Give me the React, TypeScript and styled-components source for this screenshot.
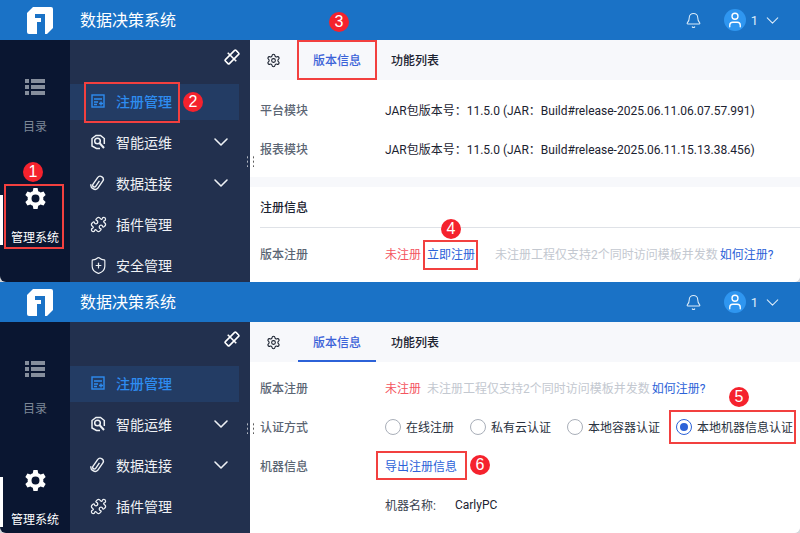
import { FC, ReactNode } from 'react';
import styled, { createGlobalStyle } from 'styled-components';
import { Bell, ChevronDown, Puzzle, Settings, ShieldPlus, User } from 'lucide-react';

const GlobalStyle = createGlobalStyle`
  html, body {
    margin: 0;
    padding: 0;
    width: 800px;
    height: 533px;
    overflow: hidden;
    background: #fff;
    font-family: Roboto, "Noto Sans CJK SC", sans-serif;
  }
  * { box-sizing: border-box; }
`;

const Panel = styled.section<{ $height: number }>`
  position: relative;
  width: 800px;
  height: ${(p) => p.$height}px;
  overflow: hidden;
  background: #d5d7db;
`;

const Header = styled.header`
  display: flex;
  align-items: center;
  height: 40px;
  padding-left: 27px;
  background: #1a72c6;
`;

const Title = styled.h1`
  margin: 0 0 3px 27px;
  font-size: 16px;
  font-weight: 400;
  color: #fff;
`;

const HeaderRight = styled.div`
  display: flex;
  align-items: center;
  margin-left: auto;
  padding-right: 17px;
  color: #dcecf9;
`;

const Avatar = styled.span`
  display: flex;
  align-items: center;
  justify-content: center;
  width: 22px;
  height: 22px;
  margin-left: 22px;
  border-radius: 50%;
  color: #fff;
  background: #2f96f0;
`;

const UserName = styled.span`
  margin: 0 4px 0 5px;
  font-size: 13px;
`;

const Body = styled.div`
  display: flex;
  height: calc(100% - 40px);
  overflow: hidden;
  border-radius: 0 0 6px 6px;
`;

const Rail = styled.aside`
  flex: none;
  width: 70px;
  padding-top: 39px;
  background: #0a1631;
`;

const RailItem = styled.div<{ $active?: boolean }>`
  position: relative;
  display: flex;
  flex-direction: column;
  align-items: center;
  gap: ${(p) => (p.$active ? 20 : 24)}px;
  margin-bottom: 52px;
  font-size: 12px;
  line-height: 16px;
  color: ${(p) => (p.$active ? '#fff' : '#7d8797')};
`;

const RailMarker = styled.i`
  position: absolute;
  left: 0;
  top: 8px;
  width: 3px;
  height: 50px;
  background: #fff;
`;

const Nav = styled.nav`
  position: relative;
  flex: none;
  width: 180px;
  padding-top: 44px;
  background: #22304e;
`;

const PinButton = styled.span`
  position: absolute;
  top: 9px;
  right: 10px;
  display: flex;
`;

const NavItem = styled.div<{ $active?: boolean }>`
  display: flex;
  align-items: center;
  width: 169px;
  height: 36px;
  margin-bottom: 5px;
  padding: 0 0 2px 21px;
  font-size: 14px;
  color: ${(p) => (p.$active ? '#2e8cf0' : '#eef1f5')};
  font-weight: ${(p) => (p.$active ? 500 : 400)};
  background: ${(p) => (p.$active ? '#233c64' : 'transparent')};
`;

const NavIcon = styled.span`
  display: flex;
  align-items: center;
  justify-content: center;
  width: 14px;
  height: 14px;
  margin-right: 11px;

  svg {
    flex: none;
  }
`;

const NavChevron = styled(ChevronDown)`
  margin-left: auto;
  margin-right: 6px;
`;

const Content = styled.main`
  flex: 1;
  min-width: 0;
  background: #f7f8fb;
  font-size: 12px;
`;

const Tabs = styled.div`
  display: flex;
  align-items: center;
  height: 40px;
  padding-left: 16px;
  color: #1b2230;
`;

const Tab = styled.div<{ $active?: boolean; $underline?: boolean }>`
  display: flex;
  align-items: center;
  justify-content: center;
  align-self: stretch;
  width: 78px;
  font-weight: 500;
  color: ${(p) => (p.$active ? '#3b62d8' : '#1b2230')};
  border-bottom: 2px solid ${(p) => (p.$underline ? '#2c62d8' : 'transparent')};
`;

const TabGear = styled.span`
  display: flex;
  width: 32px;
`;

const Card = styled.div`
  padding: 0 10px;
  background: #fff;
`;

const InfoCard = styled(Card)`
  height: 97px;
  padding-top: 10px;
  margin-bottom: 10px;
`;

const Section = styled(Card)<{ $top?: number }>`
  height: 100%;
  padding-top: ${(p) => p.$top ?? 0}px;
  padding-right: 0;
`;

const SectionTitle = styled.div`
  height: 41px;
  margin-bottom: 6px;
  line-height: 42px;
  font-weight: 500;
  color: #1b2230;
  border-bottom: 1px solid #dfe2e7;
`;

const Row = styled.div`
  display: flex;
  align-items: center;
  height: 39px;
  white-space: nowrap;
  color: #1b2230;
`;

const RowLabel = styled.span`
  flex: none;
  width: 125px;
  color: #5b6573;
  font-weight: 500;
`;

const Danger = styled.span`
  margin-right: 6px;
  color: #f4555f;
`;

const Muted = styled.span`
  margin-right: 2px;
  color: #c3c8d0;
`;

const Link = styled.span<{ $gap?: number }>`
  margin-right: ${(p) => p.$gap ?? 0}px;
  color: #2c62d8;
`;

const RadioGroup = styled.div`
  display: flex;
  align-items: center;
  gap: 16px;
`;

const RadioLabel = styled.label`
  display: flex;
  align-items: center;
  gap: 5px;
  color: #2a3240;
`;

const RadioDot = styled.span<{ $checked?: boolean }>`
  display: flex;
  align-items: center;
  justify-content: center;
  width: 16px;
  height: 16px;
  border: 1px solid ${(p) => (p.$checked ? '#2c62d8' : '#a9afb9')};
  border-radius: 50%;

  &::after {
    content: '';
    display: ${(p) => (p.$checked ? 'block' : 'none')};
    width: 8px;
    height: 8px;
    border-radius: 50%;
    background: #2c62d8;
  }
`;

const MachineName = styled.span`
  margin-right: 19px;
  color: #3a4250;
`;

const Handle = styled.div<{ $top: number }>`
  position: absolute;
  left: 252px;
  top: ${(p) => p.$top}px;
  width: 3px;
  height: 12px;
  background: radial-gradient(circle at center, #444 0.8px, transparent 1px) 0 0 / 3px 4.5px;

  &::before {
    content: '';
    position: absolute;
    left: -6px;
    top: 0;
    width: 3px;
    height: 12px;
    background: radial-gradient(circle at center, #c9ced6 0.8px, transparent 1px) 0 0 / 3px 4.5px;
  }
`;

/* red outlines and numbered callouts drawn over the screenshot */
const Callout = styled.div<{ $x: number; $y: number; $w: number; $h: number }>`
  position: absolute;
  left: ${(p) => p.$x}px;
  top: ${(p) => p.$y}px;
  width: ${(p) => p.$w}px;
  height: ${(p) => p.$h}px;
  border: 2px solid #f2403f;
`;

const Badge = styled.div<{ $x: number; $y: number }>`
  position: absolute;
  left: ${(p) => p.$x}px;
  top: ${(p) => p.$y}px;
  width: 20px;
  height: 20px;
  border-radius: 50%;
  background: #f5222d;
  color: #fff;
  font: 500 16px/20px "Liberation Sans", sans-serif;
  text-align: center;
`;

const Logo = () => (
  <svg width="26" height="27" viewBox="0 0 26 27" fill="none">
    <path d="M6 0H24Q26 0 26 2V21L20 27H2Q0 27 0 25V6Z" fill="#fff" />
    <path d="M8 7H18V27H10V15H14V11H8Z" fill="#1a72c6" />
  </svg>
);

const ListIcon = () => (
  <svg width="20" height="16" viewBox="0 0 20 16" fill="#868e9c">
    <rect x="0" y="0" width="4" height="4" />
    <rect x="6" y="0" width="14" height="4" />
    <rect x="0" y="6" width="4" height="4" />
    <rect x="6" y="6" width="14" height="4" />
    <rect x="0" y="12" width="4" height="4" />
    <rect x="6" y="12" width="14" height="4" />
  </svg>
);

const GearIcon = () => (
  <svg width="23" height="23" viewBox="0 0 22 22" fill="#fff">
    <path
      fillRule="evenodd"
      d="M9 1H13L13.6 4Q14.8 4.4 15.8 5.2L18.7 4.2L20.7 7.7L18.4 9.7Q18.6 11 18.4 12.3L20.7 14.3L18.7 17.8L15.8 16.8Q14.8 17.6 13.6 18L13 21H9L8.4 18Q7.2 17.6 6.2 16.8L3.3 17.8L1.3 14.3L3.6 12.3Q3.4 11 3.6 9.7L1.3 7.7L3.3 4.2L6.2 5.2Q7.2 4.4 8.4 4ZM11 7.2A3.8 3.8 0 1 0 11 14.8A3.8 3.8 0 1 0 11 7.2Z"
    />
  </svg>
);

const RegisterIcon = () => (
  <svg width="14" height="14" viewBox="0 0 14 14" fill="none" stroke="#2e8cf0" strokeWidth="1.4">
    <rect x="1" y="1" width="12" height="12" />
    <path d="M3 5H11M3 8H7M3 10.5H6M8 9.5H12M10 7.5V11.5" />
  </svg>
);

const OpsIcon = () => (
  <svg width="16" height="16" viewBox="0 0 16 16" fill="none" stroke="#eef1f5" strokeWidth="1.5">
    <path d="M10 14.5H6.5L2 12V4.5L6 1.5H10.5L14.3 4.5V10" />
    <circle cx="7.5" cy="7" r="2.8" />
    <path d="M9.5 9L14 14" strokeWidth="2" />
  </svg>
);

const ClipIcon = () => (
  <svg width="16" height="16" viewBox="0 0 16 16" fill="none" stroke="#eef1f5" strokeWidth="1.4">
    <g transform="rotate(35 8 8)">
      <path d="M8 5.5V12A1.7 1.7 0 0 1 4.6 12V3.8A3 3 0 0 1 10.8 3.8V12.5A4 3.5 0 0 1 3 13" />
    </g>
  </svg>
);

const PinIcon = () => (
  <svg width="16" height="16" viewBox="0 0 16 16" fill="none" stroke="#fff" strokeWidth="1.6">
    <g transform="rotate(45 8 8)">
      <rect x="5.2" y="0.5" width="5.6" height="15" rx="1" />
      <path d="M2 8H14" />
    </g>
  </svg>
);

const UserArea: FC = () => (
  <HeaderRight>
    <Bell size={17} strokeWidth={1.5} />
    <Avatar>
      <User size={18} strokeWidth={1.8} />
    </Avatar>
    <UserName>1</UserName>
    <ChevronDown size={21} strokeWidth={1.2} />
  </HeaderRight>
);

const PageHeader: FC = () => (
  <Header>
    <Logo />
    <Title>数据决策系统</Title>
    <UserArea />
  </Header>
);

const SideRail: FC = () => (
  <Rail>
    <RailItem>
      <ListIcon />
      目录
    </RailItem>
    <RailItem $active>
      <RailMarker />
      <GearIcon />
      管理系统
    </RailItem>
  </Rail>
);

const items: { label: string; icon: ReactNode; expandable?: boolean; active?: boolean }[] = [
  { label: '注册管理', icon: <RegisterIcon />, active: true },
  { label: '智能运维', icon: <OpsIcon />, expandable: true },
  { label: '数据连接', icon: <ClipIcon />, expandable: true },
  { label: '插件管理', icon: <Puzzle size={17} strokeWidth={1.8} /> },
  { label: '安全管理', icon: <ShieldPlus size={19} strokeWidth={1.5} /> },
];

const SideNav: FC<{ count: number }> = ({ count }) => (
  <Nav>
    <PinButton>
      <PinIcon />
    </PinButton>
    {items.slice(0, count).map((item) => (
      <NavItem key={item.label} $active={item.active}>
        <NavIcon>{item.icon}</NavIcon>
        {item.label}
        {item.expandable && <NavChevron size={24} strokeWidth={1.6} />}
      </NavItem>
    ))}
  </Nav>
);

const TabBar: FC<{ underline?: boolean }> = ({ underline }) => (
  <Tabs>
    <TabGear>
      <Settings size={15} strokeWidth={1.7} />
    </TabGear>
    <Tab $active $underline={underline}>
      版本信息
    </Tab>
    <Tab>功能列表</Tab>
  </Tabs>
);

const App: FC = () => (
  <>
    <GlobalStyle />
    <Panel $height={282}>
      <PageHeader />
      <Body>
        <SideRail />
        <SideNav count={5} />
        <Content>
          <TabBar />
          <InfoCard>
            <Row>
              <RowLabel>平台模块</RowLabel>
              JAR包版本号：11.5.0 (JAR：Build#release-2025.06.11.06.07.57.991)
            </Row>
            <Row>
              <RowLabel>报表模块</RowLabel>
              JAR包版本号：11.5.0 (JAR：Build#release-2025.06.11.15.13.38.456)
            </Row>
          </InfoCard>
          <Section>
            <SectionTitle>注册信息</SectionTitle>
            <Row>
              <RowLabel>版本注册</RowLabel>
              <Danger>未注册</Danger>
              <Link $gap={20}>立即注册</Link>
              <Muted>未注册工程仅支持2个同时访问模板并发数</Muted>
              <Link>如何注册?</Link>
            </Row>
          </Section>
        </Content>
      </Body>
      <Handle $top={155} />
      <Callout $x={4} $y={184} $w={60} $h={65} />
      <Callout $x={84} $y={82} $w={96} $h={41} />
      <Callout $x={297} $y={40} $w={80} $h={40} />
      <Callout $x={423} $y={240} $w={55} $h={30} />
      <Badge $x={23} $y={162}>1</Badge>
      <Badge $x={183} $y={92}>2</Badge>
      <Badge $x={329} $y={12}>3</Badge>
      <Badge $x={441} $y={219}>4</Badge>
    </Panel>
    <Panel $height={251}>
      <PageHeader />
      <Body>
        <SideRail />
        <SideNav count={4} />
        <Content>
          <TabBar underline />
          <Section $top={6}>
            <Row>
              <RowLabel>版本注册</RowLabel>
              <Danger>未注册</Danger>
              <Muted>未注册工程仅支持2个同时访问模板并发数</Muted>
              <Link>如何注册?</Link>
            </Row>
            <Row>
              <RowLabel>认证方式</RowLabel>
              <RadioGroup>
                <RadioLabel>
                  <RadioDot />
                  在线注册
                </RadioLabel>
                <RadioLabel>
                  <RadioDot />
                  私有云认证
                </RadioLabel>
                <RadioLabel>
                  <RadioDot />
                  本地容器认证
                </RadioLabel>
                <RadioLabel>
                  <RadioDot $checked />
                  本地机器信息认证
                </RadioLabel>
              </RadioGroup>
            </Row>
            <Row>
              <RowLabel>机器信息</RowLabel>
              <Link>导出注册信息</Link>
            </Row>
            <Row>
              <RowLabel />
              <MachineName>机器名称:</MachineName>
              CarlyPC
            </Row>
          </Section>
        </Content>
      </Body>
      <Handle $top={140} />
      <Callout $x={669} $y={128} $w={127} $h={34} />
      <Callout $x={376} $y={169} $w={91} $h={29} />
      <Badge $x={729} $y={105}>5</Badge>
      <Badge $x={470} $y={173}>6</Badge>
    </Panel>
  </>
);

export default App;
